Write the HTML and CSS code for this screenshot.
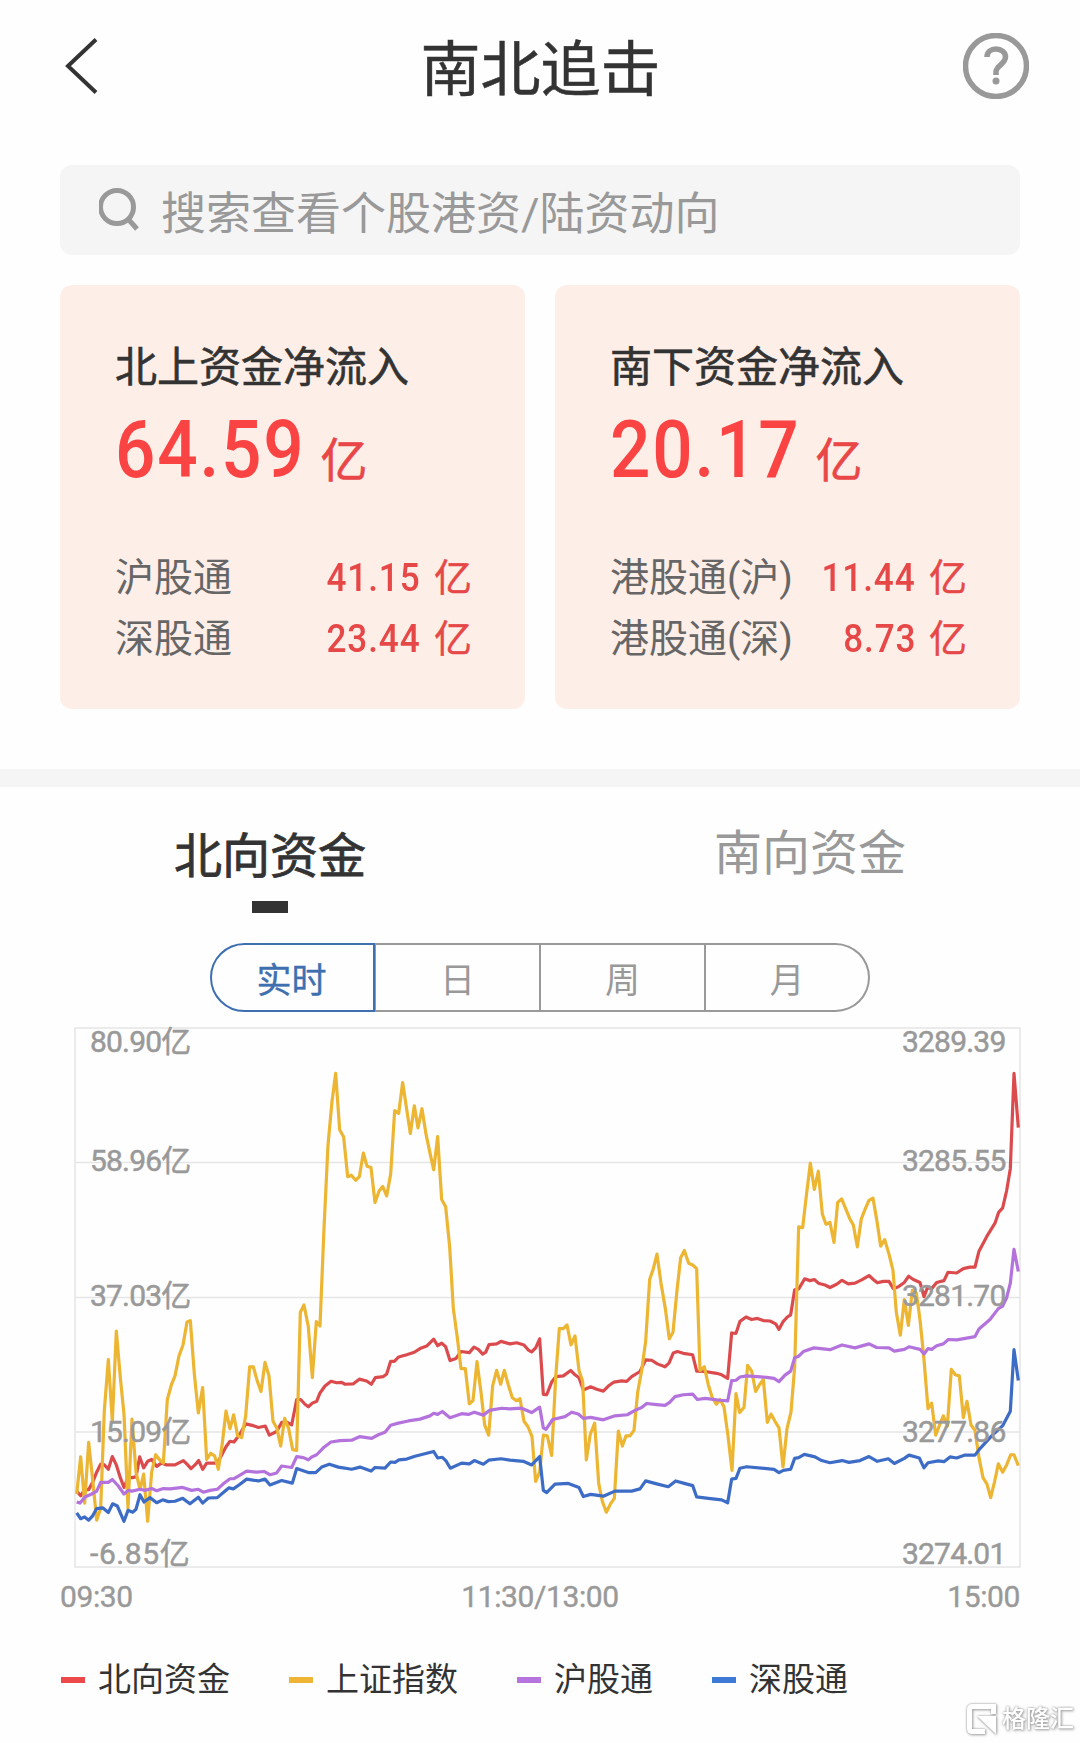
FILE: index.html
```html
<!DOCTYPE html>
<html lang="zh-CN">
<head>
    <meta charset="UTF-8">
    <meta name="viewport" content="width=device-width, initial-scale=1.0">
    <title>南北追击</title>
    <link rel="stylesheet" href="styles.css">
</head>
<body>

<header class="header">
    <svg class="back" width="52" height="66" viewBox="0 0 52 66">
        <path d="M38 6.500 10 33 38 59.500"/>
    </svg>
    <h1>南北追击</h1>
    <svg class="help" width="66" height="66" viewBox="0 0 66 66">
        <circle cx="33" cy="33" r="30.500"/>
        <path d="M24 24c0-5 4-8 9-8s9.500 3 9.500 8c0 7-9.500 8.500-9.500 15v3"/>
        <circle class="dot" cx="33" cy="48" r="3.500"/>
    </svg>
</header>

<div class="search">
    <svg width="42" height="44" viewBox="0 0 42 44">
        <circle cx="18" cy="19" r="16.500"/>
        <path d="M30 32l8 9"/>
    </svg>
    <span>搜索查看个股港资/陆资动向</span>
</div>

<div class="cards">
    <div class="card">
        <h2>北上资金净流入</h2>
        <div class="total"><span class="num">64.59</span><span class="unit">亿</span></div>
        <div class="row"><span>沪股通</span><span class="value"><b>41.15</b><i>亿</i></span></div>
        <div class="row"><span>深股通</span><span class="value"><b>23.44</b><i>亿</i></span></div>
    </div>
    <div class="card">
        <h2>南下资金净流入</h2>
        <div class="total"><span class="num">20.17</span><span class="unit">亿</span></div>
        <div class="row"><span>港股通(沪)</span><span class="value"><b>11.44</b><i>亿</i></span></div>
        <div class="row"><span>港股通(深)</span><span class="value"><b>8.73</b><i>亿</i></span></div>
    </div>
</div>

<div class="divider"></div>

<nav class="tabs">
    <div class="tab active">北向资金</div>
    <div class="tab">南向资金</div>
</nav>

<div class="periods">
    <div class="period active">实时</div>
    <div class="period">日</div>
    <div class="period">周</div>
    <div class="period">月</div>
</div>

<svg class="chart" width="947" height="541" viewBox="-1 -1 947 541">
    <g class="grid">
        <rect x="0" y="0" width="945" height="539"/>
        <path d="M0 134.500H945M0 269.500H945M0 404H945"/>
    </g>

    <!-- lines -->
    <g class="lines" transform="scale(.33333 .3635) translate(-45 -48)">
        <polyline class="north" points="50,1322 62,1335 74,1318 86,1318 98,1298 110,1270 122,1248 133,1250 145,1262 157,1227 169,1250 181,1285 192,1312 204,1285 216,1285 228,1283 239,1228 251,1258 263,1240 275,1235 290,1254 304,1245 320,1250 345,1250 370,1238 381,1248 393,1260 405,1250 416,1238 428,1262 440,1245 455,1245 470,1245 480,1232 498,1200 510,1185 522,1187 540,1165 557,1137 580,1142 595,1147 616,1143 628,1168 650,1158 665,1133 680,1132 695,1140 710,1070 722,1070 735,1083 745,1090 757,1080 770,1075 780,1052 795,1033 813,1020 830,1024 845,1023 855,1028 880,1027 898,1014 920,1019 934,1028 946,1010 970,1007 980,1000 992,965 1003,965 1016,953 1040,947 1063,940 1080,930 1100,923 1121,904 1133,922 1145,915 1157,925 1170,963 1188,957 1203,938 1228,941 1242,926 1255,932 1268,945 1277,940 1287,919 1310,917 1323,910 1350,917 1370,914 1392,920 1405,934 1415,939 1427,928 1439,903 1450,1056 1460,1057 1475,1022 1488,1007 1510,1005 1532,990 1545,1002 1557,1010 1570,1044 1592,1035 1610,1042 1630,1047 1645,1033 1662,1022 1685,1019 1700,1020 1715,1007 1740,993 1757,961 1775,962 1792,972 1815,980 1827,970 1840,942 1852,938 1870,943 1898,947 1910,992 1935,993 1970,998 1985,1002 2003,1012 2015,887 2028,888 2040,855 2058,843 2075,850 2092,847 2110,853 2130,854 2147,862 2157,877 2170,855 2182,843 2192,837 2204,768 2216,766 2234,738 2250,743 2263,740 2275,750 2295,755 2310,762 2330,753 2346,742 2365,752 2385,750 2405,741 2427,729 2440,740 2452,749 2470,745 2487,745 2500,765 2515,760 2533,748 2546,731 2560,740 2580,748 2592,787 2602,763 2615,765 2630,748 2652,743 2664,720 2690,722 2710,710 2730,706 2745,706 2757,662 2780,622 2805,585 2816,555 2828,543 2840,495 2851,435 2862,173 2875,322"/>
        <polyline class="index" points="50,1330 62,1228 74,1355 86,1188 98,1290 110,1402 122,1370 133,1100 145,960 157,1130 169,882 181,1010 192,1110 204,1370 216,1124 228,1270 240,1318 251,1275 263,1405 275,1270 287,1222 298,1235 310,1245 322,1070 334,1030 345,1005 357,950 369,920 381,857 391,853 403,1000 415,1107 428,1037 440,1235 452,1218 464,1225 475,1262 487,1190 498,1102 510,1150 521,1112 533,1170 545,1175 557,1115 569,980 580,980 592,1020 603,1048 615,968 627,1005 639,1130 651,1150 662,1198 674,1122 686,1150 698,1208 710,1210 721,830 732,810 745,870 757,1010 769,856 780,868 792,600 804,370 816,250 827,173 839,328 851,348 863,457 874,453 887,467 898,457 910,392 921,428 933,432 945,528 957,497 968,484 980,510 992,450 1004,275 1016,283 1028,198 1039,265 1051,338 1063,262 1074,323 1086,270 1098,340 1110,392 1121,438 1133,347 1145,520 1157,540 1169,650 1180,820 1192,900 1203,985 1216,985 1228,1082 1239,1073 1251,966 1263,1050 1274,1140 1286,1168 1298,1032 1310,990 1322,1028 1333,990 1345,1030 1357,1065 1369,1073 1380,1068 1392,1130 1404,1145 1416,1172 1427,1295 1439,1270 1450,1168 1462,1170 1475,1224 1487,1010 1498,875 1510,875 1521,865 1533,920 1545,895 1557,990 1568,1020 1579,1236 1591,1165 1604,1135 1616,1300 1627,1350 1639,1380 1651,1358 1663,1342 1675,1157 1687,1198 1698,1170 1710,1170 1722,1155 1733,1050 1745,990 1757,910 1769,740 1780,710 1791,670 1803,750 1816,820 1828,903 1839,885 1851,770 1862,680 1873,660 1886,695 1898,700 1910,710 1920,990 1933,980 1945,1030 1957,1065 1969,1083 1980,1070 1992,1090 2004,1170 2016,1265 2028,1054 2039,1106 2052,1092 2063,976 2075,992 2087,1048 2098,1030 2110,1015 2122,1133 2133,1110 2145,1130 2157,1148 2169,1255 2181,1150 2193,1105 2204,980 2216,595 2228,597 2239,510 2251,420 2263,492 2275,442 2287,560 2298,588 2310,583 2322,638 2333,528 2345,518 2357,545 2369,572 2380,590 2392,650 2404,573 2416,545 2427,522 2439,516 2451,580 2462,648 2474,630 2487,670 2499,715 2509,830 2521,893 2533,795 2545,866 2557,770 2569,777 2580,850 2592,960 2604,1095 2615,1080 2627,1168 2639,1140 2650,1115 2662,1143 2674,987 2686,1002 2698,1005 2710,1120 2721,1075 2733,1140 2745,1155 2757,1230 2769,1285 2781,1303 2792,1340 2804,1295 2815,1247 2828,1270 2840,1250 2852,1222 2862,1222 2875,1252"/>
        <polyline class="shanghai" points="50,1352 60,1355 75,1338 95,1330 110,1322 122,1298 145,1298 157,1290 175,1308 192,1330 205,1320 216,1322 240,1317 255,1320 275,1315 290,1321 310,1315 330,1316 368,1312 395,1320 415,1317 430,1325 450,1320 472,1317 490,1302 510,1288 522,1288 540,1278 560,1267 590,1270 612,1268 630,1277 650,1272 665,1253 695,1257 710,1227 730,1230 745,1236 755,1228 770,1222 790,1203 813,1187 840,1183 875,1182 900,1172 935,1177 955,1167 975,1160 992,1141 1015,1135 1045,1129 1080,1124 1110,1115 1121,1108 1133,1111 1147,1103 1170,1120 1205,1109 1225,1111 1243,1105 1270,1113 1288,1100 1325,1094 1350,1096 1385,1094 1415,1106 1439,1091 1450,1148 1458,1152 1478,1125 1515,1117 1535,1105 1555,1110 1570,1122 1592,1119 1630,1126 1665,1115 1702,1112 1725,1100 1745,1092 1760,1081 1790,1084 1815,1086 1830,1077 1845,1062 1870,1057 1898,1055 1912,1070 1935,1067 1980,1072 2003,1074 2015,1018 2028,1017 2040,1008 2060,1005 2120,1009 2142,1012 2157,1021 2175,1003 2192,992 2204,955 2216,951 2230,938 2262,928 2310,933 2346,920 2385,928 2427,917 2450,927 2487,928 2503,937 2533,932 2547,925 2580,932 2592,945 2604,930 2615,932 2630,922 2650,917 2665,905 2690,906 2720,901 2745,897 2757,876 2790,850 2815,820 2828,813 2840,790 2851,750 2862,657 2875,718"/>
        <polyline class="shenzhen" points="50,1382 62,1398 74,1393 86,1402 98,1390 110,1370 128,1368 145,1381 158,1357 172,1363 192,1405 204,1375 218,1380 228,1372 240,1332 252,1352 270,1340 290,1354 308,1346 325,1351 345,1350 368,1342 390,1357 415,1339 428,1355 445,1341 472,1340 490,1326 507,1313 520,1316 540,1303 560,1289 595,1294 615,1289 630,1305 665,1293 697,1300 710,1260 745,1271 767,1271 785,1256 808,1248 835,1256 875,1262 900,1256 933,1267 945,1257 975,1259 992,1242 1005,1243 1017,1236 1040,1234 1065,1226 1121,1213 1133,1231 1147,1229 1158,1239 1171,1259 1205,1245 1228,1247 1243,1238 1270,1248 1286,1237 1323,1233 1350,1237 1390,1240 1415,1250 1439,1227 1450,1320 1460,1326 1485,1303 1525,1301 1557,1312 1570,1337 1592,1331 1630,1336 1665,1322 1715,1322 1740,1316 1757,1294 1790,1302 1825,1310 1847,1294 1870,1300 1898,1307 1910,1338 1945,1342 1985,1346 2003,1354 2015,1289 2028,1287 2040,1259 2060,1255 2142,1262 2157,1271 2170,1265 2192,1262 2204,1232 2216,1230 2233,1221 2265,1228 2285,1238 2310,1244 2346,1238 2367,1243 2400,1238 2427,1227 2452,1240 2485,1233 2503,1246 2533,1232 2547,1223 2578,1231 2592,1258 2604,1244 2635,1239 2652,1241 2670,1228 2690,1231 2715,1223 2745,1223 2760,1205 2795,1170 2828,1142 2851,1102 2862,933 2875,1018"/>
    </g>

    <!-- axis labels -->
    <g class="labels">
        <text x="15" y="24">80.90亿</text>
        <text x="15" y="143">58.96亿</text>
        <text x="15" y="278">37.03亿</text>
        <text x="15" y="413.500">15.09亿</text>
        <text class="min" x="15" y="536">-6.85亿</text>
        <text x="827" y="24">3289.39</text>
        <text x="827" y="143">3285.55</text>
        <text x="827" y="278">3281.70</text>
        <text x="827" y="413.500">3277.86</text>
        <text x="827" y="536">3274.01</text>
    </g>
</svg>

<div class="times">
    <span>09:30</span>
    <span>11:30/13:00</span>
    <span>15:00</span>
</div>

<div class="legend">
    <div class="item north">北向资金</div>
    <div class="item index">上证指数</div>
    <div class="item shanghai">沪股通</div>
    <div class="item shenzhen">深股通</div>
</div>

<div class="watermark">
    <svg width="34" height="34" viewBox="0 0 34 34">
        <path class="frame" d="M28.500 12V4.500H7.500q-3 0-3 3v19q0 3 3 3H20"/>
        <path class="arrow" d="M12 14h19v18z"/>
    </svg>
    <span>格隆汇</span>
</div>

</body>
</html>
```
FILE: styles.css
```css
* {
    box-sizing: border-box;
}

body {
    margin: 0;
    width: 1080px;
    height: 1743px;
    position: relative;
    overflow: hidden;
    background: #fefefe;
    color: #333;
    font-family: Roboto, "Noto Sans CJK SC", sans-serif;
}

h1, h2 {
    margin: 0;
    font-weight: 400;
}

.header {
    display: flex;
    align-items: center;
    justify-content: space-between;
    height: 132px;
    padding: 0 51px 0 58px;
}

.header h1 {
    margin: 9px 0 0 8px;
    font-size: 60px;
    line-height: 80px;
    -webkit-text-stroke: 0.5px #333;
}

.back, .help, .search svg {
    fill: none;
    stroke: #999;
}

.back {
    stroke: #333;
    stroke-width: 4;
}

.help {
    stroke-width: 5.5;
}

.help .dot {
    fill: #999;
    stroke: none;
}

.search {
    display: flex;
    align-items: center;
    gap: 20px;
    width: 960px;
    height: 90px;
    margin: 33px 60px 30px;
    padding-left: 39px;
    border-radius: 12px;
    background: #f5f5f5;
    color: #999;
    font-size: 45px;
}

.search svg {
    stroke-width: 5;
}

.cards {
    display: flex;
    gap: 30px;
    padding: 0 60px;
}

.card {
    flex: 1;
    height: 424px;
    padding: 53px 55px 0;
    border-radius: 12px;
    background: #feeee8;
}

.card h2 {
    font-size: 42px;
    line-height: 60px;
    -webkit-text-stroke: 0.6px #333;
}

.total {
    display: flex;
    align-items: baseline;
    height: 150px;
    color: #fa4343;
    line-height: 104px;
}

/* digits are squeezed to look like a DIN face */
.total .num {
    font-size: 79px;
    font-weight: 500;
    letter-spacing: 2px;
    transform: scaleX(0.9);
    transform-origin: left;
}

.total .unit {
    margin-left: -6px;
    color: #e94648;
    font-size: 47px;
    -webkit-text-stroke: 0.6px #e94648;
}

.row {
    display: flex;
    justify-content: space-between;
    height: 61px;
    color: #666;
    font-size: 39px;
    line-height: 61px;
    white-space: nowrap;
}

.row .value {
    margin-right: -2px;
    color: #e64848;
}

.row b {
    display: inline-block;
    font-weight: 500;
    letter-spacing: 1px;
    transform: scaleX(0.9);
    transform-origin: right;
}

.row i {
    margin-left: 13px;
    font-size: 38px;
    font-style: normal;
    -webkit-text-stroke: 0.4px #e64848;
}

.divider {
    height: 18px;
    margin-top: 60px;
    background: #f5f5f5;
}

.tabs {
    display: flex;
    height: 156px;
}

.tab {
    flex: 1;
    padding-top: 32px;
    color: #999;
    font-size: 48px;
    line-height: 70px;
    text-align: center;
}

.tab.active {
    padding-top: 35px;
    color: #333;
    -webkit-text-stroke: 0.8px #333;
}

.tab.active::after {
    content: "";
    display: block;
    width: 36px;
    height: 12px;
    margin: 9px auto 0;
    background: #333;
}

.periods {
    display: flex;
    width: 660px;
    height: 69px;
    margin: 0 auto;
}

.period {
    width: 165px;
    border: 2px solid #999;
    border-left-width: 1px;
    border-right-width: 1px;
    color: #999;
    font-size: 35px;
    line-height: 73px;
    text-align: center;
}

.period.active {
    border: 2px solid #3e70b0;
    border-radius: 35px 0 0 35px;
    color: #3e70b0;
    text-indent: -2px;
    -webkit-text-stroke: 0.4px #3e70b0;
}

.period:last-child {
    border-right-width: 2px;
    border-radius: 0 35px 35px 0;
}

.chart {
    display: block;
    margin: 15px 0 0 74px;
    overflow: visible;
}

.grid {
    fill: none;
    stroke: #e5e5e5;
    stroke-width: 1.5;
}

.lines polyline {
    fill: none;
    stroke-width: 3.2;
    stroke-linejoin: round;
    vector-effect: non-scaling-stroke;
}

.lines .north { stroke: #db4b4d; }
.lines .index { stroke: #ecb532; }
.lines .shanghai { stroke: #b473dc; }
.lines .shenzhen { stroke: #3d6cc6; }

.labels {
    fill: #999;
    stroke: #999;
    stroke-width: 0.5;
    font-size: 30px;
    letter-spacing: -0.8px;
}

.labels .min {
    letter-spacing: 0.6px;
}

.times {
    display: flex;
    justify-content: space-between;
    padding: 9px 60px 0;
    color: #999;
    font-size: 30px;
    line-height: 40px;
    letter-spacing: -0.4px;
    -webkit-text-stroke: 0.4px #999;
}

.legend {
    display: flex;
    gap: 59px;
    margin-top: 38px;
    padding-left: 61px;
    font-size: 33px;
    line-height: 50px;
}

.item {
    display: flex;
    align-items: center;
    gap: 13px;
}

.item::before {
    content: "";
    width: 24px;
    height: 6px;
}

.item.north::before { background: #ec494d; }
.item.index::before { background: #edb533; }
.item.shanghai::before { background: #b674df; }
.item.shenzhen::before { background: #3f7bd6; }

/* sits over the bottom corner of the page */
.watermark {
    position: absolute;
    right: 6px;
    bottom: 7px;
    display: flex;
    align-items: center;
    gap: 3px;
    color: #fff;
    font-size: 24px;
    font-weight: 500;
    line-height: 34px;
    filter: drop-shadow(0 0 1px #999) drop-shadow(1px 1px 1px #bbb);
}

.watermark .frame {
    fill: none;
    stroke: #fff;
    stroke-width: 5;
}

.watermark .arrow {
    fill: #fff;
}
```
